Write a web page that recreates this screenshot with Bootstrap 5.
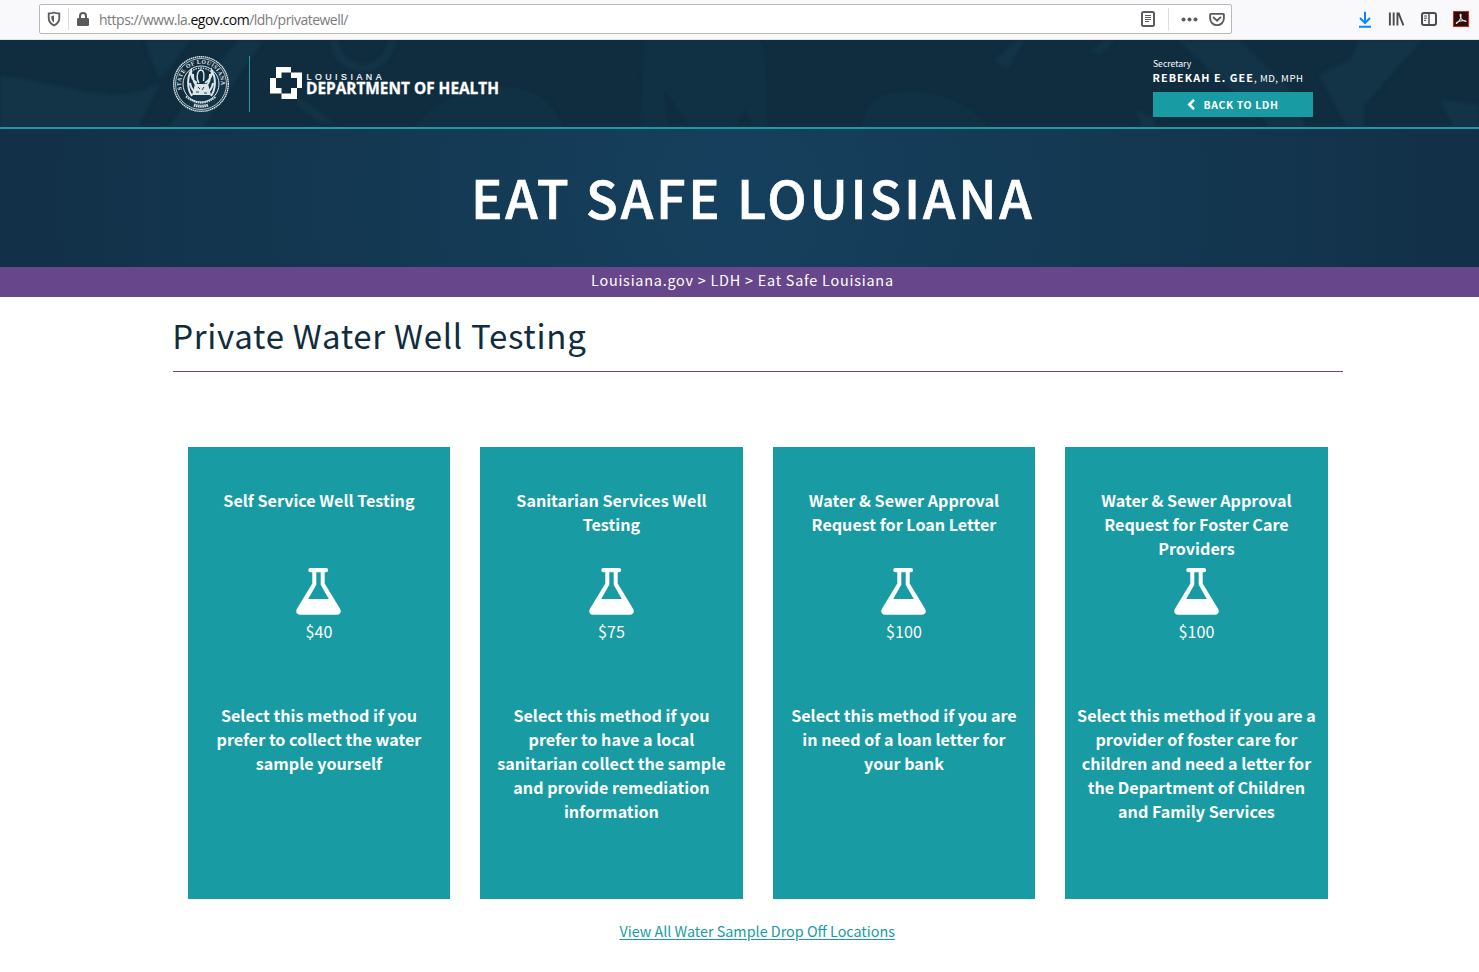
<!DOCTYPE html>
<html lang="en">
<head>
<meta charset="utf-8">
<meta name="viewport" content="width=device-width, initial-scale=1">
<title>Private Water Well Testing</title>
<link href="https://cdn.jsdelivr.net/npm/bootstrap@5.3.0/dist/css/bootstrap.min.css" rel="stylesheet">
<style>
:root{--teal:#189ba3;--navy:#0f2d3f}
body{font-family:"Noto Sans CJK SC",sans-serif;color:var(--navy);background:#fff;min-height:972px;overflow:hidden}
.browser-bar{height:40px;background:#f9f9fb;border-bottom:1px solid #e4e4e8;padding:4px 0 0 39px}
.url-box{width:1193px;height:30px;border:1px solid #b9b9bd;border-radius:2px;background:#fff;padding:0 6px 0 7px}
.url-text{font:14px/28px "Open Sans",sans-serif;color:#7b7b7d;letter-spacing:-.5px;margin-left:10px;padding-top:1px}
.url-text b{font-weight:400;color:#0c0c0d}
.vsep{width:1px;height:22px;background:#dcdcde}
.vsep-start{margin:0 8px 0 7px}
.vsep-end{margin:0 12px 0 13px}
.icon-pocket{margin-left:11px}
.toolbar-icons{height:30px;margin-left:126px;gap:16px}
.site-head{height:89px;background:var(--navy);border-bottom:2px solid var(--teal);overflow:hidden}
.head-art{position:absolute;inset:0}
.wrap{width:1170px;margin-left:173px}
.logo-rule{width:1px;height:56px;background:var(--teal);margin:0 19px 0 20px}
.contact{width:190px;color:#fff;padding-top:17px;margin-left:652px}
.sec{font-size:8.6px;line-height:13px}
.who{font-size:10.8px;line-height:15px;letter-spacing:1.08px;white-space:nowrap;margin-left:-.5px}
.who span{font-size:9.6px;letter-spacing:.5px}
.btn-back{width:160px;height:25px;background:var(--teal);color:#fff;font-size:10.5px;font-weight:700;line-height:25px;letter-spacing:.6px;margin-top:6px;padding:0;border:0;border-radius:0}
.hero{height:138px;background:radial-gradient(ellipse 760px 760px at 50% 50%,#15405d 0,#123047 100%)}
.hero h1{font-size:52.3px;font-weight:500;letter-spacing:2.76px;line-height:60px;margin:0;padding:37px 0 0 471px;color:#fff;white-space:nowrap;-webkit-text-stroke:.7px #fff}
.crumbs{height:30px;background:#68468b;color:#fff;font-size:14.4px;line-height:26px;letter-spacing:.77px;padding-left:591px;white-space:nowrap}
.page-title{font-size:33px;font-weight:400;letter-spacing:.71px;line-height:40px;padding:18px 0 16px;margin:0;border-bottom:1px solid #68468b;height:75px;text-indent:-.8px}
.tiles{--bs-gutter-x:30px;margin:75px .3px 0 -.3px}
.tile{background:var(--teal);color:#fff;height:452px;padding:41px 8px 0;font-size:16.12px;line-height:24px;text-align:center;border:0;border-radius:0}
.tile h2{font-size:inherit;line-height:inherit;font-weight:700;height:80px;margin:0}
.tile svg{display:block;margin:0 auto}
.price{height:84px;margin-top:4px}
.drop{font-size:14.37px;line-height:24px;margin:20px .8px 0 -.8px}
.drop a{color:var(--teal);text-underline-offset:2px}
</style>
</head>
<body>
<svg class="d-none">
<symbol id="flask" viewBox="0 0 45 47"><path fill="currentColor" fill-rule="evenodd" d="M14.400 0H30a2 2 0 0 1 0 4.300H28.700V15.500L43.900 40.500C46 44 44 46.800 41 46.800H4C1 46.800-1 44 1.100 40.500L16.300 15.500V4.300H14.400a2 2 0 0 1 0-4.300ZM20.300 4.300V16.700L12.200 31H32.800L24.700 16.700V4.300Z"/></symbol>
</svg>
<div class="browser-bar d-flex">
 <div class="url-box d-flex align-items-center flex-shrink-0">
  <svg width="14" height="16" viewBox="0 0 14 16" fill="none" stroke="#5b5b5f" stroke-width="1.800"><path d="M7 1.500C5.300 2.400 3.500 2.500 1.700 2.500V7c0 3.600 2.300 6 5.300 7.500 3-1.500 5.300-3.900 5.300-7.500V2.500C10.500 2.500 8.700 2.400 7 1.500Z"/><path d="M7 4.500v7C5.200 10.300 4.400 9 4.400 7V5Z" fill="#5b5b5f" stroke="none"/></svg>
  <span class="vsep vsep-start"></span>
  <svg width="12" height="14" viewBox="0 0 12 14"><path d="M3 6.500V4a3 3 0 0 1 6 0v2.500" fill="none" stroke="#5b5b5f" stroke-width="2"/><rect y="6" width="12" height="8" rx="1.300" fill="#5b5b5f"/></svg>
  <span class="url-text">https://www.la.<b>egov.com</b>/ldh/privatewell/</span>
  <svg class="ms-auto" width="14" height="16" viewBox="0 0 14 16" fill="none" stroke="#5b5b5f"><rect x="1" y="1" width="12" height="14" rx="1.500" stroke-width="2"/><path d="M4 4.500h6M4 6.500h6M4 8.500h6M4 10.500h4"/></svg>
  <span class="vsep vsep-end"></span>
  <svg width="17" height="5" viewBox="0 0 17 5" fill="#5b5b5f"><circle cx="2.500" cy="2.500" r="2"/><circle cx="8.500" cy="2.500" r="2"/><circle cx="14.500" cy="2.500" r="2"/></svg>
  <svg class="icon-pocket" width="16" height="15" viewBox="0 0 17 15" fill="none" stroke="#5b5b5f" stroke-width="2"><path d="M2 1.500h13q.8 0 .8.800V6.500a7.300 7 0 0 1-14.600 0V2.300q0-.8.8-.8Z"/><path d="M4.800 5.300 8.500 8.800l3.700-3.500" stroke-linecap="round"/></svg>
 </div>
 <div class="toolbar-icons d-flex align-items-center">
  <svg width="14" height="17" viewBox="0 0 14 17" fill="none" stroke="#0a84ff" stroke-width="2"><path d="M7 0.800V12M2 7l5 5 5-5M1 15.800h12"/></svg>
  <svg width="17" height="16" viewBox="0 0 18 16" stroke="#4a4a4f" stroke-width="2"><path d="M2 1v14M6 1v14M10 1v14M11 1.300l5.300 13.500"/></svg>
  <svg width="16" height="14" viewBox="0 0 16 14" fill="none" stroke="#4a4a4f"><rect x="1" y="1" width="14" height="12" rx="2" stroke-width="2"/><path d="M8 1v12" stroke-width="1.500"/><path d="M3 4h3M3 6.200h3M3 8.400h2"/></svg>
  <svg width="16" height="16" viewBox="0 0 16 16"><rect x=".5" y=".5" width="15" height="15" fill="#2b0d10" stroke="#e3200f"/><path d="M3.500 12.500C6 11 8.800 6.500 8 3.500c-1-1-1.400 1 .2 4 1.300 2 3 3.200 4.800 3 .3-1.700-6.500-.8-9 .8-.8.700-.8 1.300-.5 1.200Z" fill="none" stroke="#eadfdc" stroke-width="1.100"/></svg>
 </div>
</div>

<header class="site-head position-relative">
 <svg class="head-art" width="1479" height="87" viewBox="0 0 1479 87" fill="#16384b">
  <defs><filter id="soft" x="-5%" y="-20%" width="110%" height="140%"><feGaussianBlur stdDeviation="2"/></filter></defs>
  <g filter="url(#soft)" opacity=".65">
  <path d="M0 36C40 40 75 52 110 54C130 55 145 50 160 43L138 87H0ZM145 0H190C180 15 172 25 160 40L152 22ZM238 0H264L203 87H168Z"/>
  <path d="M330 0c4 42 60 42 66 0h-8c-4 32-46 32-50 0ZM300 58l35 25h-14l-26-20Z"/>
  <path d="M415 87c20-28 60-42 90-40 30 2 48 15 58 40ZM645 0h115c10 28 4 60 8 87h-15l-8-20-10 20H690L662 44 668 87H640ZM862 87c5-30 25-37 58-35 30 4 52 15 68 35Z" opacity=".6"/>
  <path d="M1016 0h9l-18 30-12-10ZM1178 0h62l55 55 10 32h-34ZM1360 0h62l-58 65 0 22h-17l-28-52 31-15ZM1100 15l15-15h-10l-15 12ZM1440 60l39 5v22h-25ZM1135 70l20 8v9h-12Z"/>
  </g>
 </svg>
 <div class="wrap position-relative d-flex">
  <div class="d-flex align-items-start pt-3">
   <svg width="56" height="56" viewBox="0 0 56 56" fill="none" stroke="#dde5e9">
    <circle cx="28" cy="28" r="27.300" stroke-width="1.400" stroke-dasharray="1.500 .5"/><circle cx="28" cy="28" r="25.500" stroke-width=".8"/><circle cx="28" cy="28" r="18" stroke-width="1"/>
    <path id="ringTop" d="M9.200 34.500A20 20 0 1 1 46.800 34.500" stroke="none"/>
    <g fill="#e6ecef" stroke="none" font-family="Liberation Serif,serif" font-weight="700"><text font-size="5.800"><textPath href="#ringTop" textLength="70" startOffset="1">STATE OF LOUISIANA</textPath></text></g>
    <path d="M16 17Q28 7 40 17" stroke-width="1.300" stroke-dasharray="1.500 1"/>
    <path d="M13 40.500Q28 53 43 40.500" stroke-width="1.800" stroke-dasharray="1.500 .7"/><path d="M21 49q7 2.500 14 0" stroke-width="3" stroke-dasharray="1.500 .6"/>
    <path d="M26 27C23 23 24 15 27.500 14c3.500 0 4 4 3 11" stroke-width="1.400"/>
    <path d="M24 27C20 25 18 20 18 15c-4 7-4 18 1 25M32 27c5-3 7-7 7-12 4 7 4 18-1 25M20 18c0 7 1 9 4 12M37 18c0 7-1 9-4 12M17 27c1 5 2 7 5 9M40 27c-1 5-2 7-5 9" stroke-width="2"/>
    <path d="M22 28h13l3 11H19Z" fill="#dde5e9" stroke="none"/><path d="M25 31l2 2M31 31l-2 3M23 36h3M31 37h3" stroke="#234454"/>
   </svg>
   <span class="logo-rule"></span>
   <svg class="overflow-visible" width="236" height="56" viewBox="0 0 236 56" fill="#fff">
    <path fill-rule="evenodd" d="M7 11H22V16.500H33V32H28V43H12.500V37.500H1V22H7ZM12.500 16.500V22H7V32H12.500V37.500H22V32H28V22H22V16.500Z"/>
    <text x="37.500" y="23.700" font-family="Liberation Sans,sans-serif" font-size="8.800" textLength="75" stroke="#fff" stroke-width=".2">LOUISIANA</text>
    <text x="37" y="37.600" font-family="Open Sans,sans-serif" font-size="16.200" font-weight="700" stroke="#fff" stroke-width=".3" textLength="193" lengthAdjust="spacingAndGlyphs">DEPARTMENT OF HEALTH</text>
   </svg>
  </div>
  <div class="contact ms-auto me-0">
   <div class="sec">Secretary</div>
   <div class="who"><strong>REBEKAH E. GEE</strong><span>, MD, MPH</span></div>
   <a href="#" class="btn btn-back d-flex justify-content-center align-items-center"><svg class="me-2" width="8" height="11" viewBox="0 0 8 11" fill="none" stroke="#fff" stroke-width="2.600"><path d="M7 .9 2.300 5.500 7 10.100"/></svg>BACK TO LDH</a>
  </div>
 </div>
</header>
<section class="hero"><h1>EAT SAFE LOUISIANA</h1></section>
<nav class="crumbs">Louisiana.gov &gt; LDH &gt; Eat Safe Louisiana</nav>
<main class="wrap">
 <h2 class="page-title">Private Water Well Testing</h2>
 <div class="row tiles">
  <div class="col-3"><div class="card tile d-block"><h2>Self Service Well Testing</h2><svg width="45" height="47"><use href="#flask"/></svg><div class="price">$40</div><strong>Select this method if you<br>prefer to collect the water<br>sample yourself</strong></div></div>
  <div class="col-3"><div class="card tile d-block"><h2>Sanitarian Services Well<br>Testing</h2><svg width="45" height="47"><use href="#flask"/></svg><div class="price">$75</div><strong>Select this method if you<br>prefer to have a local<br>sanitarian collect the sample<br>and provide remediation<br>information</strong></div></div>
  <div class="col-3"><div class="card tile d-block"><h2>Water &amp; Sewer Approval<br>Request for Loan Letter</h2><svg width="45" height="47"><use href="#flask"/></svg><div class="price">$100</div><strong>Select this method if you are<br>in need of a loan letter for<br>your bank</strong></div></div>
  <div class="col-3"><div class="card tile d-block"><h2>Water &amp; Sewer Approval<br>Request for Foster Care<br>Providers</h2><svg width="45" height="47"><use href="#flask"/></svg><div class="price">$100</div><strong class="text-nowrap">Select this method if you are a<br>provider of foster care for<br>children and need a letter for<br>the Department of Children<br>and Family Services</strong></div></div>
 </div>
 <div class="drop text-center"><a href="#">View All Water Sample Drop Off Locations</a></div>
</main>
<script src="https://cdn.jsdelivr.net/npm/bootstrap@5.3.0/dist/js/bootstrap.bundle.min.js"></script>
</body>
</html>
